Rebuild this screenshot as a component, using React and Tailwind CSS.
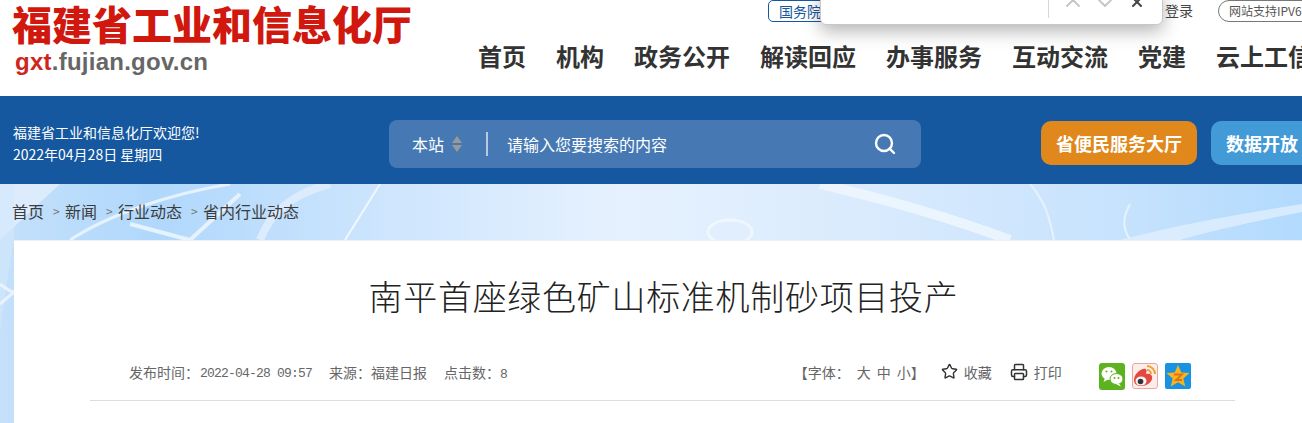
import { Search, Star, Printer, ChevronUp, ChevronDown, X } from 'lucide-react'

const CJK = '"Noto Sans CJK SC", "Liberation Sans", sans-serif'
const MONO = '"Liberation Mono", monospace'

const NAV = ['首页', '机构', '政务公开', '解读回应', '办事服务', '互动交流', '党建', '云上工信']

function WechatIcon() {
  return (
    <svg width="26" height="27" viewBox="0 0 26 27">
      <rect width="26" height="27" rx="3" fill="#5cb31f" />
      <ellipse cx="10" cy="10.5" rx="7.5" ry="6.5" fill="#fff" />
      <path d="M6 15l-1.5 4 4.5-2.5z" fill="#fff" />
      <ellipse cx="17.5" cy="16" rx="6.5" ry="5.5" fill="#fff" stroke="#5cb31f" />
      <path d="M20 20.5l2 3-4.5-2z" fill="#fff" />
      <circle cx="7.5" cy="8.5" r="1" fill="#5cb31f" />
      <circle cx="12.5" cy="8.5" r="1" fill="#5cb31f" />
      <circle cx="15.5" cy="15" r="1" fill="#5cb31f" />
      <circle cx="19.5" cy="15" r="1" fill="#5cb31f" />
    </svg>
  )
}

function WeiboIcon() {
  return (
    <svg width="26" height="26" viewBox="0 0 26 26">
      <rect x="0.5" y="0.5" width="25" height="25" rx="2.5" fill="#fbeeea" stroke="#eba6a0" />
      <path d="M2 17c0-5 5-10 9-11 4-1 4 2 3 5 4-1 7 1 6 5-1 4-6 7-10 7-5 0-8-2-8-6z" fill="#e2483f" />
      <ellipse cx="9" cy="18" rx="5.5" ry="4.5" fill="#f4f4f4" />
      <circle cx="8.5" cy="18.5" r="2.8" fill="#333" />
      <path d="M15 3a8 8 0 0 1 8 8M15 7a4 4 0 0 1 4 4" fill="none" stroke="#f0a030" strokeWidth="2" />
    </svg>
  )
}

function QzoneIcon() {
  return (
    <svg width="26" height="26" viewBox="0 0 26 26">
      <rect width="26" height="26" rx="2" fill="#1a92e2" />
      <path d="M13 2l3.3 7.4 8.2.7-6.2 5.3 2 8-7.3-4.2-7.3 4.2 2-8L1.500 10.100l8.200-.7z" fill="#f7b51c" />
      <path d="M9 11.500h8l-6 5.500h6" fill="none" stroke="#e0701c" strokeWidth="1.8" />
    </svg>
  )
}

export default function App() {
  return (
    <div className="relative h-[423px] w-[1302px] overflow-hidden bg-white text-[#333]" style={{ fontFamily: CJK }}>
      {/* Browser find bar, sits over the top links */}
      <div className="absolute left-[820px] top-[-10px] z-20 flex h-[35px] w-[343px] items-start rounded-md border border-[#c8c8c8] bg-white shadow-[0_6px_18px_rgba(0,0,0,0.3)]">
        <div className="ml-[227px] h-[27px] w-px bg-[#d8d8d8]" />
        <ChevronUp className="ml-[12px] text-[#c4c4c4]" size={24} strokeWidth={1.8} />
        <ChevronDown className="ml-[8px] text-[#c4c4c4]" size={24} strokeWidth={1.8} />
        <X className="ml-[12px] mt-[3px] text-[#444]" size={16} strokeWidth={3} />
      </div>

      {/* Header */}
      <header className="flex h-[96px] bg-white">
        <div className="ml-[12px] w-[437px] shrink-0">
          <div className="mt-px whitespace-nowrap text-[40px] font-black leading-[44px] text-[#d0180f]">福建省工业和信息化厅</div>
          <div className="ml-[3px] mt-[3px] text-[24px] font-bold leading-[28px] tracking-[0.25px]" style={{ fontFamily: '"Liberation Sans", sans-serif' }}>
            <span className="text-[#d0251c]">gxt</span>
            <span className="text-[#666]">.fujian.gov.cn</span>
          </div>
        </div>
        <div className="min-w-0 flex-1">
          <div className="flex h-[22px] items-start">
            <div className="ml-[319px] flex h-[22px] w-[70px] shrink-0 items-center rounded-[5px] border border-[#1558a0] pl-[10px] text-[14px] text-[#1558a0] whitespace-nowrap">国务院</div>
            <div className="ml-[327px] shrink-0 text-[14px] leading-[20px] text-[#444] whitespace-nowrap">登录</div>
            <div className="ml-[25px] flex h-[22px] w-[100px] shrink-0 items-center rounded-[11px] border border-[#777] pl-[10px] text-[12px] text-[#555] whitespace-nowrap">网站支持IPV6</div>
          </div>
          <nav className="mt-[16px] flex gap-[30px] pl-[29px] whitespace-nowrap text-[24px] font-bold leading-[36px] text-[#333]">
            {NAV.map(n => <a key={n} className="shrink-0">{n}</a>)}
          </nav>
        </div>
      </header>

      {/* Blue band */}
      <div className="flex h-[88px] items-start bg-[#1558a0] text-white">
        <div className="ml-[13px] mt-[25px] w-[376px] shrink-0 text-[14px] leading-[22px]">
          <p>福建省工业和信息化厅欢迎您!</p>
          <p>2022年04月28日 星期四</p>
        </div>
        <div className="mt-[24px] flex h-[48px] w-[532px] shrink-0 items-center rounded-lg bg-[#4679b4] pl-[23px]">
          <span className="text-[16px]">本站</span>
          <span className="ml-[8px] flex flex-col gap-[2px]">
            <span className="h-0 w-0 border-x-[5px] border-b-[7px] border-x-transparent border-b-[#999]" />
            <span className="h-0 w-0 border-x-[5px] border-t-[7px] border-x-transparent border-t-[#999]" />
          </span>
          <span className="ml-[24px] h-[24px] w-[2px] bg-[#b5c9e1]" />
          <span className="ml-[19px] text-[16px]">请输入您要搜索的内容</span>
          <Search className="ml-auto mr-[24px]" size={24} strokeWidth={2.4} />
        </div>
        <div className="ml-[120px] mt-[25px] flex h-[44px] w-[156px] shrink-0 items-center justify-center rounded-[10px] bg-[#e0881c] text-[18px] font-bold">省便民服务大厅</div>
        <div className="ml-[14px] mt-[25px] flex h-[44px] w-[120px] shrink-0 items-center rounded-[10px] bg-[#429ad6] pl-[15px] text-[18px] font-bold whitespace-nowrap">数据开放</div>
      </div>

      {/* Light background with breadcrumb and article */}
      <div className="relative h-[239px] bg-[#dcecfb]">
        <svg className="absolute inset-0" width="1302" height="239" viewBox="0 0 1302 239">
          <defs>
            <linearGradient id="sky" x1="0" x2="1" y1="0" y2="0">
              <stop offset="0" stopColor="#c4e0fb" />
              <stop offset="0.12" stopColor="#b0d8fc" />
              <stop offset="0.28" stopColor="#cbe4fd" />
              <stop offset="0.48" stopColor="#e6f1fe" />
              <stop offset="0.68" stopColor="#d8eafd" />
              <stop offset="0.85" stopColor="#c8e3fd" />
              <stop offset="1" stopColor="#b2dafd" />
            </linearGradient>
          </defs>
          <rect width="1302" height="239" fill="url(#sky)" />
          <path d="M0 56L60 0h-60z" fill="#e2effc" opacity="0.8" />
          <path d="M0 150C6 100 10 80 14 56V0H0z" fill="#d4e8fc" opacity="0.6" />
          <path d="M70 56C110 30 170 10 230 0" fill="none" stroke="#e6f2fe" strokeWidth="3" />
          <path d="M130 40l60 16 50-46" fill="none" stroke="#e6f2fe" strokeWidth="4" />
          <path d="M260 56C270 30 290 10 330 0" fill="none" stroke="#dcecfd" strokeWidth="8" />
          <path d="M345 56L380 0" fill="none" stroke="#f0f7fe" strokeWidth="2" />
          <path d="M820 0C880 14 940 30 1010 56" fill="none" stroke="#f0f7fe" strokeWidth="10" opacity="0.8" />
          <path d="M1030 0C1046 18 1050 36 1054 56" fill="none" stroke="#e6f2fe" strokeWidth="2" />
          <path d="M1130 56C1120 40 1125 30 1130 20" fill="none" stroke="#e6f2fe" strokeWidth="2" />
          <path d="M1120 56C1180 40 1240 30 1302 20v8C1240 40 1200 50 1180 56z" fill="#e0effe" opacity="0.8" />
          <ellipse cx="730" cy="48" rx="22" ry="12" fill="none" stroke="#eef6fe" strokeWidth="3" />
          <path d="M0 100c5 4 10 8 14 8M0 120l14-12" fill="none" stroke="#eaf3fd" strokeWidth="3" />
        </svg>
        <div className="relative flex h-[56px] items-center pb-[2px] pl-[12px] text-[16px] text-[#3c3c3c]">
          <span>首页</span>
          <span className="ml-[9px] mr-[3px] w-[9px] text-[12px] text-[#777]">&gt;</span>
          <span>新闻</span>
          <span className="ml-[9px] mr-[3px] w-[9px] text-[12px] text-[#777]">&gt;</span>
          <span>行业动态</span>
          <span className="ml-[9px] mr-[3px] w-[9px] text-[12px] text-[#777]">&gt;</span>
          <span>省内行业动态</span>
        </div>
        <article className="relative ml-[14px] h-[183px] border-t border-[#f0f0f0] bg-white">
          <h1 className="pl-[11px] pt-[30px] text-center text-[34px] font-light leading-[50px] tracking-[0.7px] text-[#222]">南平首座绿色矿山标准机制砂项目投产</h1>
          <div className="ml-[76px] mt-[38px] flex h-[42px] w-[1145px] items-start border-b border-[#ddd] pl-[39px] pt-[2px] text-[14px] leading-[22px] text-[#666]">
            <span>发布时间：</span>
            <span className="ml-px mt-[2px] text-[13px] tracking-[-0.8px]" style={{ fontFamily: MONO }}>2022-04-28 09:57</span>
            <span className="ml-[17px]">来源：福建日报</span>
            <span className="ml-[17px]">点击数：<span style={{ fontFamily: MONO }} className="text-[13px]">8</span></span>
            <span className="ml-[286px]">【字体：</span>
            <span className="ml-[7px]">大</span>
            <span className="ml-[6px]">中</span>
            <span className="ml-[6px]">小】</span>
            <Star className="ml-[16px] mt-[2px] text-[#333]" size={17} />
            <span className="ml-[6px]">收藏</span>
            <Printer className="ml-[18px] mt-[2px] text-[#333]" size={18} />
            <span className="ml-[6px]">打印</span>
            <span className="ml-[37px] mt-[2px] flex gap-[7px]">
              <WechatIcon />
              <WeiboIcon />
              <QzoneIcon />
            </span>
          </div>
        </article>
      </div>
    </div>
  )
}
